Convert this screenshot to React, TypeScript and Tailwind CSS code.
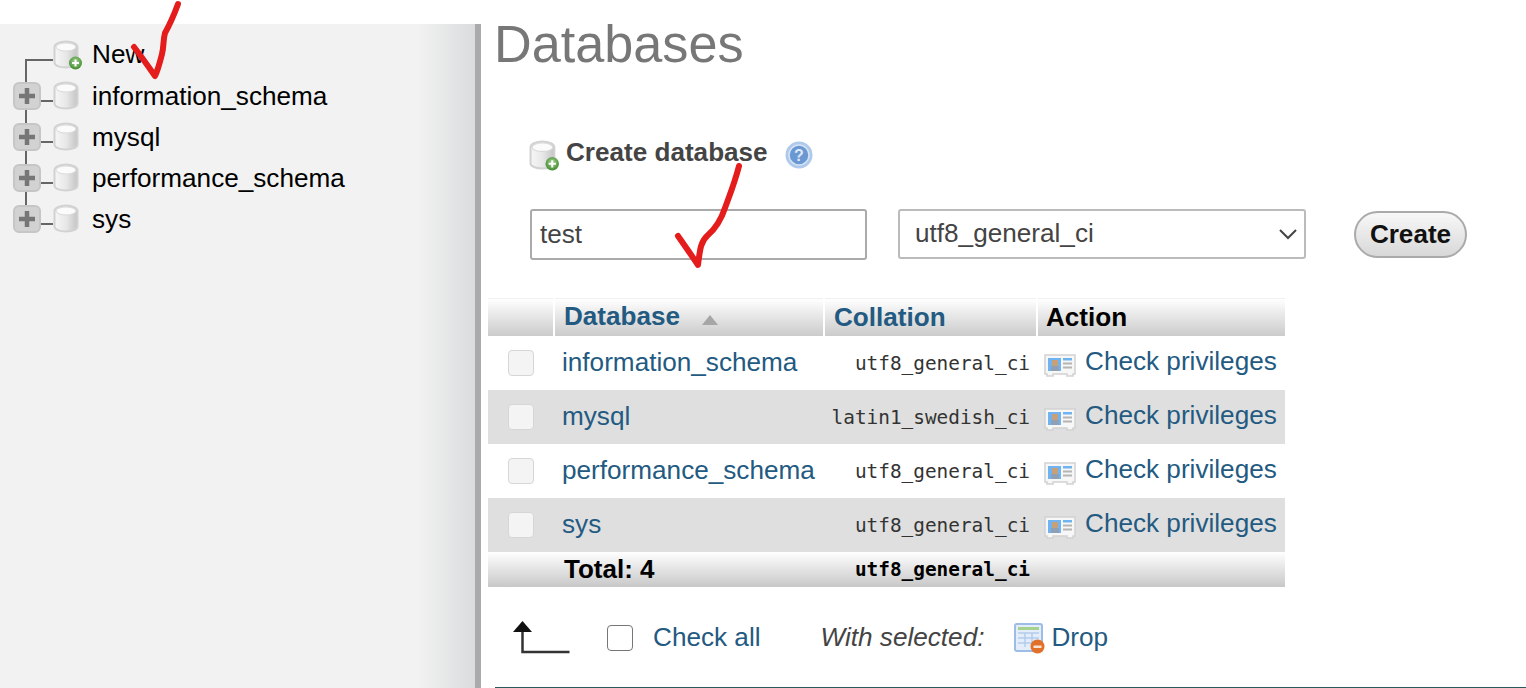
import React from 'react';

const sans = "font-['Liberation_Sans',Arial,sans-serif]";
const mono = "font-['DejaVu_Sans_Mono',monospace]";

const databases = [
  { name: 'information_schema', collation: 'utf8_general_ci' },
  { name: 'mysql', collation: 'latin1_swedish_ci' },
  { name: 'performance_schema', collation: 'utf8_general_ci' },
  { name: 'sys', collation: 'utf8_general_ci' },
];

function Cylinder({ badge, size = 30 }: { badge?: boolean; size?: number }) {
  return (
    <svg width={size} height={size} viewBox="0 0 30 30" className="shrink-0">
      <defs>
        <linearGradient id="cyl" x1="0" x2="1" y1="0" y2="0">
          <stop offset="0" stopColor="#f6f6f6" />
          <stop offset="0.5" stopColor="#e8e8e8" />
          <stop offset="1" stopColor="#c4c4c4" />
        </linearGradient>
        <radialGradient id="badge" cx="0.5" cy="0.4" r="0.6">
          <stop offset="0" stopColor="#a8d495" />
          <stop offset="1" stopColor="#3f8a2c" />
        </radialGradient>
      </defs>
      <path
        d="M1.5 7c0-3 5-5.500 11.500-5.500S24.500 4 24.500 7v15.500c0 3-5 5-11.500 5s-11.500-2-11.500-5z"
        fill="url(#cyl)"
        stroke="#d2d2d2"
        strokeWidth="2"
      />
      <ellipse cx="13" cy="7" rx="10" ry="4" fill="#fbfbfb" stroke="#dadada" />
      {badge && (
        <g>
          <circle cx="22.5" cy="23" r="6.500" fill="url(#badge)" />
          <path d="M22.500 19.500v7M19 23h7" stroke="#fff" strokeWidth="2" />
        </g>
      )}
    </svg>
  );
}

function Expander() {
  return (
    <div className="flex h-[28px] w-[28px] shrink-0 items-center justify-center rounded-[6px] border-2 border-[#c6c6c6] bg-[#d2d2d2]">
      <svg width="18" height="18" viewBox="0 0 18 18">
        <path d="M9 1v16M1 9h16" stroke="#767676" strokeWidth="4.500" />
      </svg>
    </div>
  );
}

function PrivilegesIcon() {
  return (
    <svg width="32" height="23" viewBox="0 0 32 23" className="shrink-0">
      <path d="M1 1h30v19h-2v2h-6v-2H9v2H3v-2H1z" fill="#f7f7f7" stroke="#d2d2d2" strokeWidth="1.500" />
      <rect x="4" y="4" width="13" height="13" fill="#6fb4f0" />
      <rect x="8" y="6" width="6" height="6" fill="#c79f78" />
      <rect x="7" y="12" width="8" height="5" fill="#8fa0b4" />
      <rect x="19" y="4" width="9" height="2.500" fill="#6fb4f0" />
      <rect x="19" y="8.500" width="9" height="2" fill="#b4b4b4" />
      <rect x="19" y="12.500" width="9" height="2" fill="#b4b4b4" />
    </svg>
  );
}

function DropIcon() {
  return (
    <svg width="31" height="31" viewBox="0 0 31 31" className="shrink-0">
      <rect x="1" y="1" width="27" height="27" rx="2" fill="#e4eefa" stroke="#9dbde6" strokeWidth="2" />
      <rect x="4" y="4" width="21" height="3" fill="#a5d28e" />
      <path d="M4 10h21M4 15h21M4 20h21M11 10v14M18 10v14" stroke="#b3cbec" strokeWidth="1.500" />
      <circle cx="23.500" cy="23.500" r="7" fill="#e0702a" />
      <rect x="19.500" y="22.500" width="8" height="2.500" fill="#fbe3d4" />
    </svg>
  );
}

function HelpIcon() {
  return (
    <svg width="28" height="28" viewBox="0 0 28 28" className="shrink-0">
      <circle cx="14" cy="14" r="13.500" fill="#aec9ea" />
      <circle cx="14" cy="14" r="10" fill="#6a98d2" stroke="#d5e3f5" strokeWidth="1.500" />
      <text x="14" y="20" textAnchor="middle" fontSize="16" fontWeight="700" fill="#dfe9f6" fontFamily="Liberation Sans">
        ?
      </text>
    </svg>
  );
}

const headerCell =
  'flex h-[38px] items-center border-t border-[#f0f0f0] bg-linear-to-b from-[#ffffff] to-[#cbcbcb] text-[26.1px] font-bold';

export default function App() {
  return (
    <div className={`relative flex h-[688px] w-[1526px] overflow-hidden bg-white ${sans}`}>
      <div className="flex w-[481px] shrink-0 pt-[24px]">
        <aside className="relative flex-1 bg-linear-to-r from-[#f2f2f2] from-[88%] to-[#dadcdd] pt-[10px]">
          <div className="absolute left-[25px] top-[35px] h-[160px] w-[2px] bg-[#666]" />
          <div className="flex h-[41px] items-center text-[26.15px] text-black">
            <div className="ml-[26px] mt-[10px] h-[2px] w-[27px] bg-[#666]" />
            <Cylinder badge />
            <span className="ml-[9px]">New</span>
          </div>
          {databases.map((db) => (
            <div key={db.name} className="relative flex h-[41px] items-center text-[26.15px] text-black">
              <div className="relative ml-[13px]">
                <Expander />
              </div>
              <div className="mt-[10px] h-[2px] w-[12px] bg-[#666]" />
              <Cylinder />
              <span className="ml-[9px] mt-[2px] leading-none">{db.name}</span>
            </div>
          ))}
        </aside>
        <div className="w-[6px] bg-[#aaaaaa]" />
      </div>

      <main className="flex flex-1 flex-col text-[26.15px]">
        <h1 className="ml-[13px] mt-[14px] h-[60px] text-[52.2px] leading-[60px] text-[#777777]">Databases</h1>

        <div className="ml-[48px] mt-[62px] flex h-[39px] items-center text-[#444444]">
          <Cylinder badge size={31} />
          <h2 className="mb-[6px] ml-[6px] text-[26.1px] font-bold">Create database</h2>
          <div className="mb-[2px] ml-[17px]">
            <HelpIcon />
          </div>
        </div>

        <form className="ml-[49px] mt-[34px] flex items-start">
          <input
            defaultValue="test"
            className="h-[51px] w-[337px] rounded-[3px] border-2 border-[#aaaaaa] bg-white px-[8px] text-[26.15px] text-[#444444] outline-none"
          />
          <div className="relative ml-[31px]">
            <select
              defaultValue="utf8_general_ci"
              className="h-[50px] w-[408px] appearance-none rounded-[3px] border-2 border-[#bbbbbb] bg-white pl-[15px] text-[26.15px] text-[#444444] outline-none"
            >
              <option>utf8_general_ci</option>
              <option>latin1_swedish_ci</option>
            </select>
            <svg width="18" height="11" viewBox="0 0 18 11" className="pointer-events-none absolute right-[9px] top-[20px]">
              <path d="M1 1l8 8 8-8" fill="none" stroke="#444444" strokeWidth="2" />
            </svg>
          </div>
          <button
            type="button"
            className="ml-[48px] mt-[2px] h-[47px] w-[113px] rounded-full border-2 border-[#aaaaaa] bg-linear-to-b from-[#f8f8f8] to-[#d8d8d8] text-[26.1px] font-bold text-[#111111]"
          >
            Create
          </button>
        </form>

        <div className="ml-[7px] mt-[38px] grid w-[797px] grid-cols-[65px_2px_268px_2px_211px_2px_247px]">
          <div className={headerCell} />
          <div />
          <div className={`${headerCell} pl-[9px] text-[#235a81]`}>
            <span className="mb-[2px]">Database</span>
            <svg width="16" height="10" viewBox="0 0 16 10" className="ml-[22px] mt-[4px]">
              <path d="M8 0l8 10H0z" fill="#a6a6a6" />
            </svg>
          </div>
          <div />
          <div className={`${headerCell} pl-[9px] text-[#235a81]`}>Collation</div>
          <div />
          <div className={`${headerCell} pl-[8px] text-black`}>Action</div>

          {databases.map((db, i) => (
            <div
              key={db.name}
              className={`col-span-7 grid h-[54px] grid-cols-subgrid items-center ${i % 2 ? 'bg-[#dfdfdf]' : 'bg-white'}`}
            >
              <div className="flex justify-center pl-[1px]">
                <input
                  type="checkbox"
                  className="h-[26px] w-[26px] appearance-none rounded-[4px] border border-[#d6d6d6] bg-[#f4f4f4]"
                />
              </div>
              <div className="col-span-2 pl-[9px] text-[#235a81]">{db.name}</div>
              <div className={`col-span-2 mt-[2px] pr-[6px] text-right text-[19.4px] text-[#333333] ${mono}`}>{db.collation}</div>
              <div className="col-span-2 flex items-center pl-[8px] text-[#235a81]">
                <div className="mt-[5px]">
                  <PrivilegesIcon />
                </div>
                <span className="mb-[3px] ml-[9px] whitespace-nowrap">Check privileges</span>
              </div>
            </div>
          ))}

          <div className="col-span-7 grid h-[35px] grid-cols-subgrid items-center bg-linear-to-b from-[#ffffff] to-[#c8c8c8] font-bold leading-[30px] text-black">
            <div />
            <div className="col-span-2 mb-[2px] pl-[11px] text-[26px]">Total: 4</div>
            <div className={`col-span-2 mt-[1px] pr-[6px] text-right text-[19.4px] ${mono}`}>utf8_general_ci</div>
            <div className="col-span-2" />
          </div>
        </div>

        <div className="ml-[32px] mt-[34px] flex h-[34px] items-center">
          <svg width="58" height="34" viewBox="0 0 58 34" className="mt-[-1px] shrink-0">
            <path d="M9.500 6v25h47" fill="none" stroke="#333333" strokeWidth="2.500" />
            <path d="M9.500 0l9.500 11H0z" fill="#111111" />
          </svg>
          <input
            type="checkbox"
            className="ml-[36px] h-[26px] w-[26px] appearance-none rounded-[4px] border border-[#767676] bg-white"
          />
          <span className="ml-[20px] text-[#235a81]">Check all</span>
          <span className="ml-[60px] italic text-[#444444]">With selected:</span>
          <div className="ml-[30px]">
            <DropIcon />
          </div>
          <span className="ml-[6px] text-[#235a81]">Drop</span>
        </div>

        <div className="ml-[14px] mt-auto h-[1px] bg-[#2a5a60]" />
      </main>

      <svg
        className="pointer-events-none absolute left-0 top-0"
        width="1526"
        height="688"
        viewBox="0 0 1526 688"
        fill="none"
        stroke="#e51c1c"
        strokeWidth="6"
        strokeLinecap="round"
        strokeLinejoin="round"
      >
        <path d="M178 4C174 15 170 24 165 33C163 40 164 46 162 54C160 62 158 70 155 76C148 66 141 56 134 47" />
        <path d="M739 166C735 182 729 197 725 208C721 220 716 228 708 235C701 241 700 248 698 265C692 256 685 246 678 236" />
      </svg>
    </div>
  );
}
